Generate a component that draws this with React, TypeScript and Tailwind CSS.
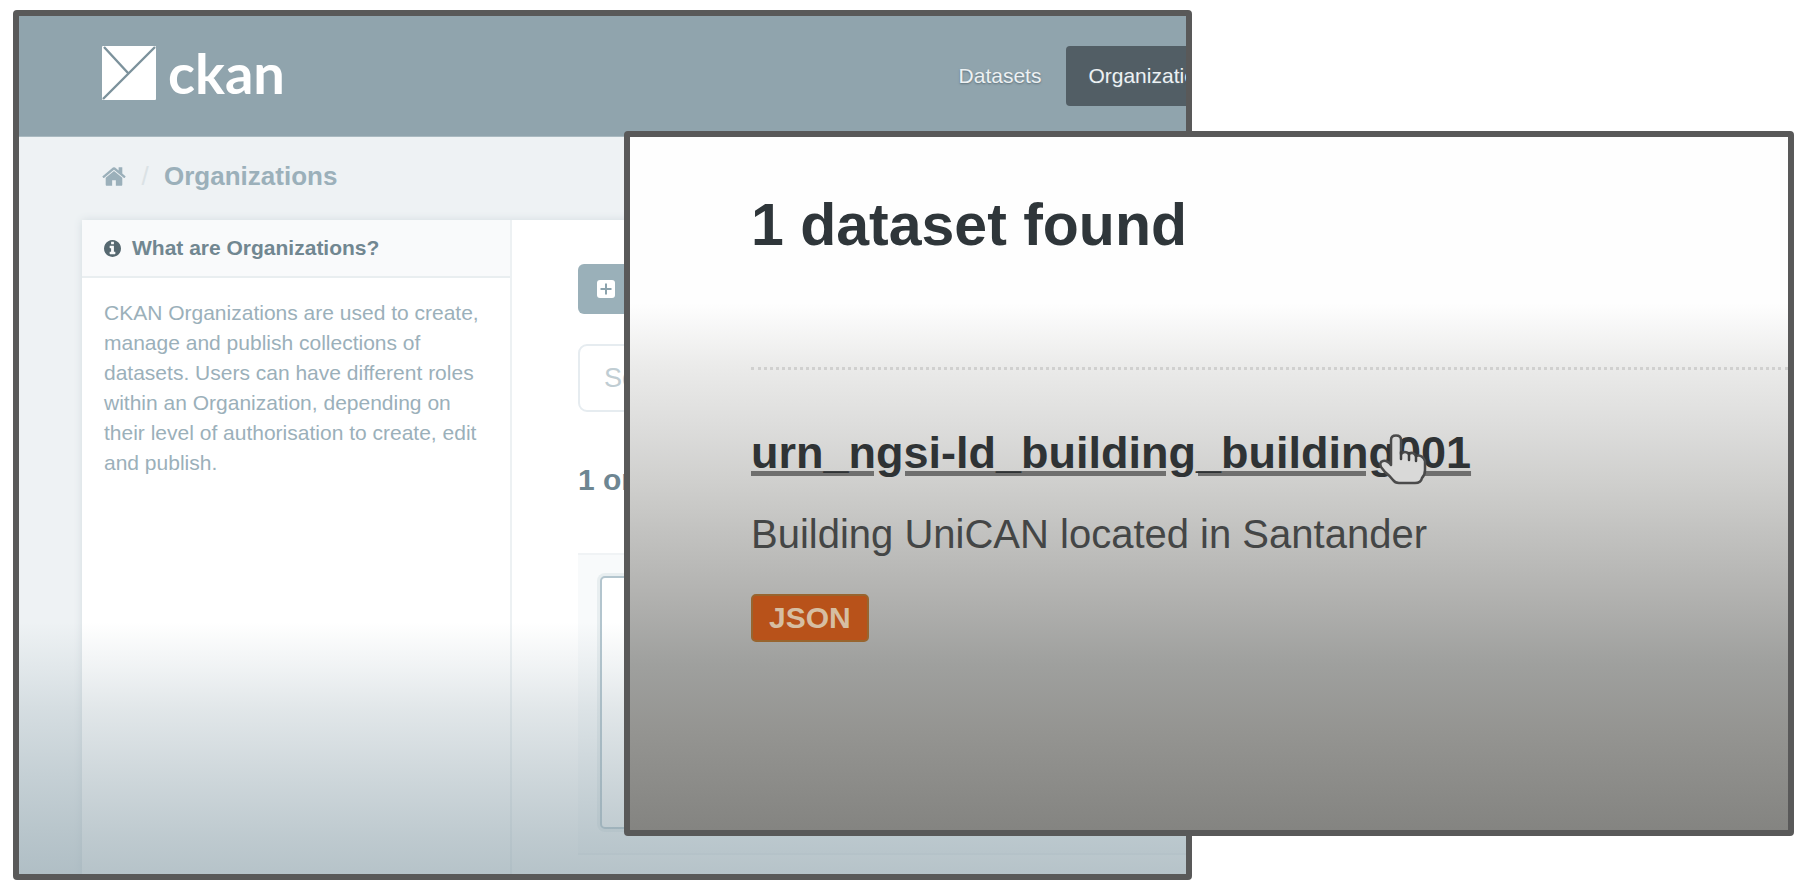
import React from "react";

function Logo() {
  return (
    <a href="#home" className="mb-[6px] flex items-center gap-3 text-white">
      <svg viewBox="0 0 54 54" className="size-[54px]" aria-hidden="true">
        <rect x="0" y="0" width="54" height="54" rx="1" fill="#ffffff" />
        <path d="M1 53 L53 1 M2 1 L26 27" stroke="#7c929c" strokeWidth="2.4" fill="none" />
      </svg>
      <span className="font-[Lato,sans-serif] text-[56px] leading-[60px] font-bold">ckan</span>
    </a>
  );
}

function HomeIcon() {
  return (
    <svg viewBox="0 200 1664 1400" className="h-[21px] w-6" fill="currentColor" aria-hidden="true">
      <path d="M1408 992v480q0 26-19 45t-45 19h-384v-384h-256v384h-384q-26 0-45-19t-19-45v-480q0-1 .5-3t.5-3l575-474 575 474q1 2 1 6zm223-69l-62 74q-8 9-21 11h-3q-13 0-21-7l-692-577-692 577q-12 8-24 7-13-2-21-11l-62-74q-8-10-7-23.500t11-21.500l719-599q32-26 76-26t76 26l244 204v-195q0-14 9-23t23-9h192q14 0 23 9t9 23v408l219 182q10 8 11 21.500t-7 23.500z" />
    </svg>
  );
}

function InfoIcon() {
  return (
    <svg
      viewBox="128 128 1536 1536"
      className="size-[17px] shrink-0 text-[#566870]"
      fill="currentColor"
      aria-hidden="true"
    >
      <path d="M1152 1376v-160q0-14-9-23t-23-9h-96v-512q0-14-9-23t-23-9h-320q-14 0-23 9t-9 23v160q0 14 9 23t23 9h96v320h-96q-14 0-23 9t-9 23v160q0 14 9 23t23 9h448q14 0 23-9t9-23zm-128-896v-160q0-14-9-23t-23-9h-192q-14 0-23 9t-9 23v160q0 14 9 23t23 9h192q14 0 23-9t9-23zm640 416q0 209-103 385.500t-279.500 279.500-385.500 103-385.500-103-279.500-279.500-103-385.500 103-385.500 279.500-279.500 385.500-103 385.500 103 279.500 279.500 103 385.500z" />
    </svg>
  );
}

function PlusSquareIcon() {
  return (
    <svg viewBox="0 0 18 18" className="size-[18px] shrink-0" aria-hidden="true">
      <rect width="18" height="18" rx="3" fill="#ffffff" />
      <path d="M9 3.500 V14.500 M3.500 9 H14.500" stroke="#8ba3ad" strokeWidth="2" />
    </svg>
  );
}

function PointerHand() {
  return (
    <svg
      viewBox="0 0 50 52"
      className="absolute top-[9px] left-[627px] h-[52px] w-[50px]"
      aria-hidden="true"
    >
      <path
        d="M13 31 V6 Q13 1.500 18 1.500 Q23 1.500 23 6 V20 Q27 16 31 20 Q35 17 38 22 Q44 20 47 27 V36 Q47 41 44 44 Q43 49 37 49 H21 Q17 49 15 46 Q12 42 7 38 L3 33 Q1 28 5 27 Q9 26 13 31 Z"
        fill="#d9d9d8"
        stroke="#4b4b4b"
        strokeWidth="2.5"
        strokeLinejoin="round"
      />
      <path d="M23 18 V25 M31 19 V26 M38 21 V27" stroke="#3f3f3f" strokeWidth="2.5" strokeLinecap="round" />
    </svg>
  );
}

function OrganizationsWindow() {
  return (
    <section className="relative w-[calc(100%-20px)] max-w-[1179px] overflow-hidden rounded-[4px] border-6 border-[#595959] bg-[#eef2f4]">
      <header className="flex h-[121px] items-center border-b border-[#a9b9c0] bg-[#90a4ad] pl-[83px]">
        <Logo />
        <nav className="-mr-[54px] ml-auto flex shrink-0 gap-1 text-[21px] leading-[30px] text-[#edf1f3] [text-shadow:0_1px_2px_#5d6f78]">
          <a href="#datasets" className="px-[21px] py-[15px]">
            Datasets
          </a>
          <a href="#organizations" className="rounded-[4px] bg-[#525e65] px-[22px] py-[15px]">
            Organizations
          </a>
        </nav>
      </header>

      <nav className="flex items-center pt-[23px] pb-7 pl-[83px] text-[26px] leading-8 text-[#9bb0ba]">
        <a href="#home" aria-label="Home">
          <HomeIcon />
        </a>
        <span className="w-[38px] text-center text-[#dbe2e5]">/</span>
        <a href="#organizations" className="font-bold">
          Organizations
        </a>
      </nav>

      <div className="ml-[63px] flex rounded-tl-[2px] bg-white shadow-[0_0_8px_#d3dce0]">
        <aside className="w-[430px] shrink-0 border-r-2 border-[#edf1f3]">
          <h2 className="flex items-center gap-[11px] border-b-2 border-[#e9eef0] bg-[#f9fafb] px-[22px] py-[13px] text-[21px] leading-[30px] font-bold text-[#718791]">
            <InfoIcon />
            What are Organizations?
          </h2>
          <p className="px-[22px] pt-5 text-[21px] leading-[30px] text-[#9bb0ba]">
            CKAN Organizations are used to create, manage and publish collections of datasets. Users
            can have different roles within an Organization, depending on their level of
            authorisation to create, edit and publish.
          </p>
        </aside>

        <main className="min-w-0 flex-1 pt-11 pb-[19px] pl-[66px]">
          <button
            type="button"
            className="flex h-[50px] items-center gap-3 rounded-[6px] bg-[#9ab0b9] px-[19px] text-[21px] text-white"
          >
            <PlusSquareIcon />
            Add Organization
          </button>
          <input
            type="search"
            aria-label="Search organizations"
            placeholder="Search organizations..."
            className="mt-[30px] block h-[68px] w-[560px] rounded-[9px] border-2 border-[#e6ecf0] px-6 text-[27px] placeholder:text-[#c0cdd3]"
          />
          <h1 className="mt-[50px] text-[30px] leading-9 font-bold text-[#6e8692]">
            1 organization found
          </h1>
          <div className="mt-[55px] border-y-2 border-[#f0f3f5] bg-[#f8fafb] pt-[21px] pb-6 pl-[22px]">
            <div className="h-[253px] w-[260px] rounded-[5px] border-2 border-[#b3c5ce] bg-white shadow-[0_0_0_3px_#e8eef0]" />
          </div>
        </main>
      </div>

      <div className="pointer-events-none absolute inset-x-0 bottom-0 h-[252px] bg-[linear-gradient(to_bottom,rgba(144,164,173,0),rgba(144,164,173,0.15)_20%,rgba(144,164,173,0.27)_35%,rgba(144,164,173,0.43)_60%,rgba(144,164,173,0.58)_85%,rgba(144,164,173,0.66))]" />
    </section>
  );
}

function DatasetWindow() {
  return (
    <section className="absolute top-[131px] right-[18px] left-[624px] min-h-[705px] overflow-hidden rounded-[4px] border-6 border-[#595959] bg-[linear-gradient(to_bottom,#fefefe_24%,#ebebea_33%,#dededd_41%,#cfcfcd_50%,#c2c2c0_57%,#b2b2b0_66%,#9fa09e_76%,#949491_86%,#848481)] pt-14 pl-[121px]">
      <h2 className="text-[59px] leading-[64px] font-bold text-[#2f363a]">1 dataset found</h2>
      <hr className="mt-[110px] border-0 border-t-3 border-dotted border-[#d0d0cf]" />
      <article>
        <h3 className="relative mt-[55px] text-[45px] leading-14 font-bold text-[#2f3335]">
          <a
            href="#building001"
            className="underline decoration-[#6f6f6e] decoration-[5px] underline-offset-[3px]"
          >
            urn_ngsi-ld_building_building001
          </a>
          <PointerHand />
        </h3>
        <p className="mt-[29px] text-[40px] leading-12 text-[#444646]">
          Building UniCAN located in Santander
        </p>
        <a
          href="#json"
          className="mt-9 inline-block rounded-[5px] border-2 border-[#98652f] bg-[#b8521a] px-4 text-[30px] leading-11 font-bold text-[#d6bea2]"
        >
          JSON
        </a>
      </article>
    </section>
  );
}

export default function App() {
  return (
    <div className="relative min-h-screen bg-white pt-[10px] pl-[13px] font-['Liberation_Sans',Arial,sans-serif]">
      <OrganizationsWindow />
      <DatasetWindow />
    </div>
  );
}
